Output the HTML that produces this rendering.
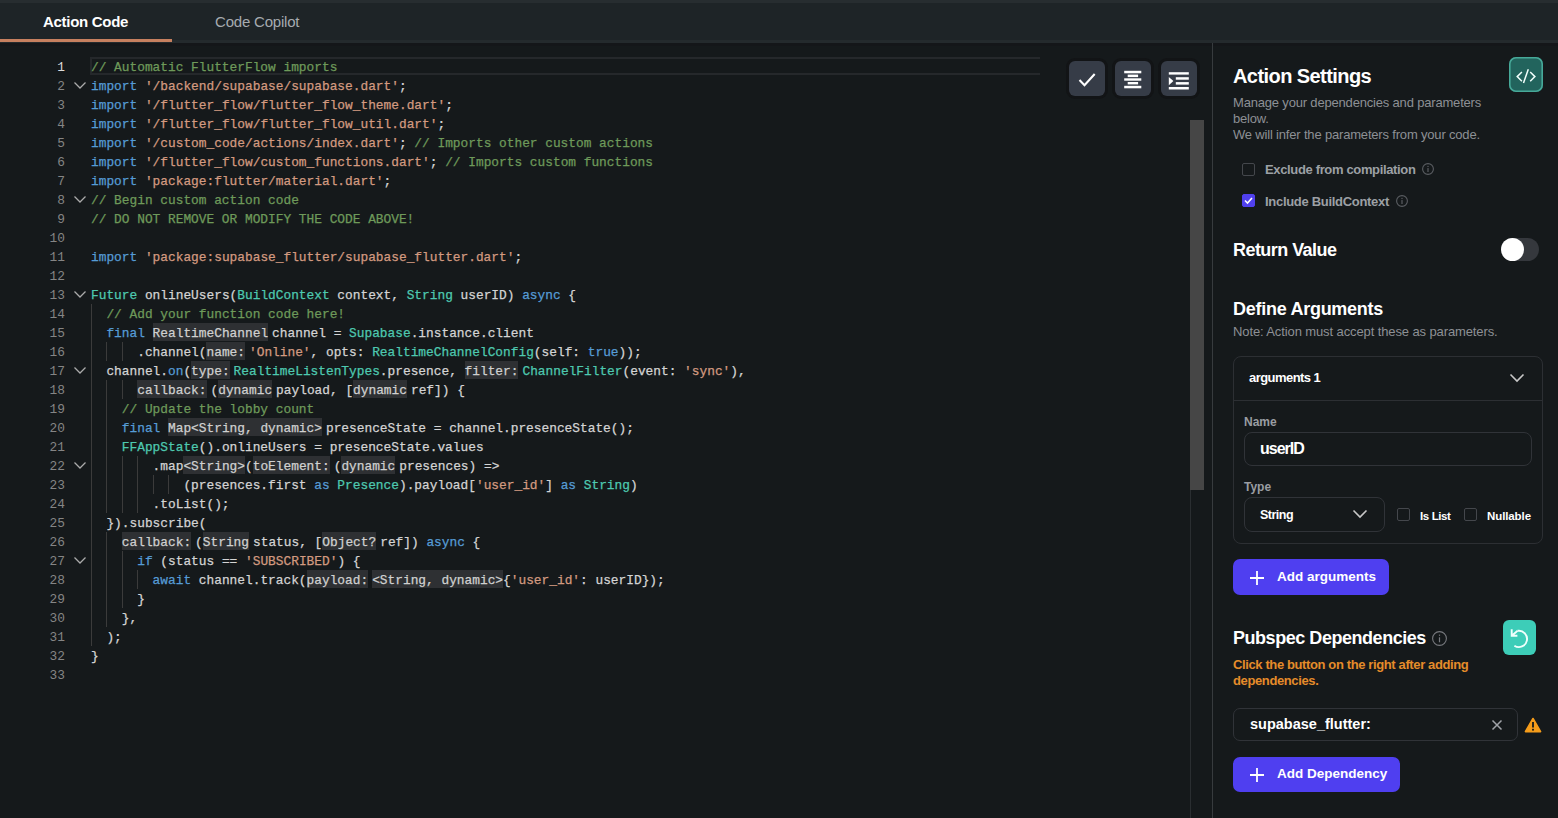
<!DOCTYPE html>
<html><head><meta charset="utf-8">
<style>
*{margin:0;padding:0;box-sizing:border-box}
html,body{width:1558px;height:818px;overflow:hidden;background:#15191b;font-family:"Liberation Sans",sans-serif;position:relative}
.a{position:absolute}
#tabs{left:0;top:0;width:1558px;height:43px;background:#1e2427;border-bottom:3px solid #242a2d}
#tabtop{left:0;top:0;width:1558px;height:3px;background:#272d30}
.tab{top:13px;font-size:15px;line-height:18px;white-space:nowrap}
#t1{left:43px;color:#fff;font-weight:bold;letter-spacing:-0.3px}
#t2{left:215px;color:#a6abb0;letter-spacing:-0.2px}
#uline{left:0;top:39px;width:172px;height:3px;background:#c6805f}
#tabshadow{left:0;top:43px;width:1558px;height:3px;background:#141619}
#divider{left:1212px;top:43px;width:1px;height:775px;background:#373b3e}
#sbtrack{left:1190px;top:490px;width:1px;height:328px;background:#2a2e31}
#sbthumb{left:1190px;top:120px;width:14px;height:370px;background:#464646}
#curline{left:90px;top:57px;width:950px;height:18px;border:2px solid #25282b;border-right:none}
.ln{position:absolute;left:0;width:65px;text-align:right;height:19px;line-height:19px;color:#858585;font-family:"Liberation Mono",monospace;font-size:12.83px}
.ln.act{color:#dcdcdc}
.fold{position:absolute;left:73px}
.ig{position:absolute;width:1px;height:19px;background:#3b3b3b}
.l{position:absolute;left:91px;height:19px;line-height:19px;white-space:pre;font-family:"Liberation Mono",monospace;font-size:12.83px;color:#d4d4d4;-webkit-text-stroke:0.25px currentColor}
.k{color:#569cd6}.s{color:#d39a80}.t{color:#4ec9b0}.c{color:#6e9a5a}
.h{background:#2e3033;color:#d0d0d0;margin-right:4px;padding:3px 0 0}.h.n{margin-right:0}
.btn{top:61px;width:36px;height:35px;border-radius:6px;background:#363c47;box-shadow:0 0 0 3px #121416}
/* panel */
.pt{color:#fff;font-weight:bold;white-space:nowrap}
.sub{color:#8d9095;font-size:13px;line-height:16px;white-space:nowrap}
.cb{width:13px;height:13px;border:1px solid #44474c;border-radius:2px}
.lbl{color:#9ca0a5;font-size:13.5px;font-weight:bold;white-space:nowrap}
.info{width:12px;height:12px;border:1px solid #6c6f74;border-radius:50%}.info:after{content:"";position:absolute;left:50%;top:30%;width:1.2px;height:45%;margin-left:-0.6px;background:#6c6f74}.info:before{content:"";position:absolute;left:50%;top:18%;width:1.2px;height:1.2px;margin-left:-0.6px;background:#6c6f74}
.box{border:1px solid #2c2f33;border-radius:8px}
.pbtn{background:#4f3ff0;border-radius:7px}
</style></head>
<body>
<div class="a" id="tabs"></div>
<div class="a" id="tabtop"></div>
<div class="a tab" id="t1">Action Code</div>
<div class="a tab" id="t2">Code Copilot</div>
<div class="a" id="uline"></div>
<div class="a" id="tabshadow"></div>
<div class="a" id="curline"></div>
<div class="a" id="sbtrack"></div>
<div class="ln act" style="top:58px">1</div>
<div class="l" style="top:58px"><span class="c">// Automatic FlutterFlow imports</span></div>
<div class="ln" style="top:77px">2</div>
<svg class="fold" style="top:81px" width="14" height="9" viewBox="0 0 14 9"><path d="M1.5 1.5 L7 7 L12.5 1.5" fill="none" stroke="#ababab" stroke-width="1.25"/></svg>
<div class="l" style="top:77px"><span class="k">import</span> <span class="s">&#x27;/backend/supabase/supabase.dart&#x27;</span>;</div>
<div class="ln" style="top:96px">3</div>
<div class="l" style="top:96px"><span class="k">import</span> <span class="s">&#x27;/flutter_flow/flutter_flow_theme.dart&#x27;</span>;</div>
<div class="ln" style="top:115px">4</div>
<div class="l" style="top:115px"><span class="k">import</span> <span class="s">&#x27;/flutter_flow/flutter_flow_util.dart&#x27;</span>;</div>
<div class="ln" style="top:134px">5</div>
<div class="l" style="top:134px"><span class="k">import</span> <span class="s">&#x27;/custom_code/actions/index.dart&#x27;</span>; <span class="c">// Imports other custom actions</span></div>
<div class="ln" style="top:153px">6</div>
<div class="l" style="top:153px"><span class="k">import</span> <span class="s">&#x27;/flutter_flow/custom_functions.dart&#x27;</span>; <span class="c">// Imports custom functions</span></div>
<div class="ln" style="top:172px">7</div>
<div class="l" style="top:172px"><span class="k">import</span> <span class="s">&#x27;package:flutter/material.dart&#x27;</span>;</div>
<div class="ln" style="top:191px">8</div>
<svg class="fold" style="top:195px" width="14" height="9" viewBox="0 0 14 9"><path d="M1.5 1.5 L7 7 L12.5 1.5" fill="none" stroke="#ababab" stroke-width="1.25"/></svg>
<div class="l" style="top:191px"><span class="c">// Begin custom action code</span></div>
<div class="ln" style="top:210px">9</div>
<div class="l" style="top:210px"><span class="c">// DO NOT REMOVE OR MODIFY THE CODE ABOVE!</span></div>
<div class="ln" style="top:229px">10</div>
<div class="l" style="top:229px"></div>
<div class="ln" style="top:248px">11</div>
<div class="l" style="top:248px"><span class="k">import</span> <span class="s">&#x27;package:supabase_flutter/supabase_flutter.dart&#x27;</span>;</div>
<div class="ln" style="top:267px">12</div>
<div class="l" style="top:267px"></div>
<div class="ln" style="top:286px">13</div>
<svg class="fold" style="top:290px" width="14" height="9" viewBox="0 0 14 9"><path d="M1.5 1.5 L7 7 L12.5 1.5" fill="none" stroke="#ababab" stroke-width="1.25"/></svg>
<div class="l" style="top:286px"><span class="t">Future</span> onlineUsers(<span class="t">BuildContext</span> context, <span class="t">String</span> userID) <span class="k">async</span> {</div>
<div class="ln" style="top:305px">14</div>
<div class="ig" style="top:304px;left:91.0px"></div>
<div class="l" style="top:305px">  <span class="c">// Add your function code here!</span></div>
<div class="ln" style="top:324px">15</div>
<div class="ig" style="top:323px;left:91.0px"></div>
<div class="l" style="top:324px">  <span class="k">final</span> <span class="h">RealtimeChannel</span>channel = <span class="t">Supabase</span>.instance.client</div>
<div class="ln" style="top:343px">16</div>
<div class="ig" style="top:342px;left:91.0px"></div>
<div class="ig" style="top:342px;left:106.4px"></div>
<div class="ig" style="top:342px;left:121.8px"></div>
<div class="l" style="top:343px">      .channel(<span class="h">name:</span><span class="s">&#x27;Online&#x27;</span>, opts: <span class="t">RealtimeChannelConfig</span>(self: <span class="k">true</span>));</div>
<div class="ln" style="top:362px">17</div>
<svg class="fold" style="top:366px" width="14" height="9" viewBox="0 0 14 9"><path d="M1.5 1.5 L7 7 L12.5 1.5" fill="none" stroke="#ababab" stroke-width="1.25"/></svg>
<div class="ig" style="top:361px;left:91.0px"></div>
<div class="l" style="top:362px">  channel.<span class="k">on</span>(<span class="h">type:</span><span class="t">RealtimeListenTypes</span>.presence, <span class="h">filter:</span><span class="t">ChannelFilter</span>(event: <span class="s">&#x27;sync&#x27;</span>),</div>
<div class="ln" style="top:381px">18</div>
<div class="ig" style="top:380px;left:91.0px"></div>
<div class="ig" style="top:380px;left:106.4px"></div>
<div class="ig" style="top:380px;left:121.8px"></div>
<div class="l" style="top:381px">      <span class="h">callback:</span>(<span class="h">dynamic</span>payload, [<span class="h">dynamic</span>ref]) {</div>
<div class="ln" style="top:400px">19</div>
<div class="ig" style="top:399px;left:91.0px"></div>
<div class="ig" style="top:399px;left:106.4px"></div>
<div class="l" style="top:400px">    <span class="c">// Update the lobby count</span></div>
<div class="ln" style="top:419px">20</div>
<div class="ig" style="top:418px;left:91.0px"></div>
<div class="ig" style="top:418px;left:106.4px"></div>
<div class="l" style="top:419px">    <span class="k">final</span> <span class="h">Map&lt;String, dynamic&gt;</span>presenceState = channel.presenceState();</div>
<div class="ln" style="top:438px">21</div>
<div class="ig" style="top:437px;left:91.0px"></div>
<div class="ig" style="top:437px;left:106.4px"></div>
<div class="l" style="top:438px">    <span class="t">FFAppState</span>().onlineUsers = presenceState.values</div>
<div class="ln" style="top:457px">22</div>
<svg class="fold" style="top:461px" width="14" height="9" viewBox="0 0 14 9"><path d="M1.5 1.5 L7 7 L12.5 1.5" fill="none" stroke="#ababab" stroke-width="1.25"/></svg>
<div class="ig" style="top:456px;left:91.0px"></div>
<div class="ig" style="top:456px;left:106.4px"></div>
<div class="ig" style="top:456px;left:121.8px"></div>
<div class="ig" style="top:456px;left:137.2px"></div>
<div class="l" style="top:457px">        .map<span class="h n">&lt;String&gt;</span>(<span class="h">toElement:</span>(<span class="h">dynamic</span>presences) =&gt;</div>
<div class="ln" style="top:476px">23</div>
<div class="ig" style="top:475px;left:91.0px"></div>
<div class="ig" style="top:475px;left:106.4px"></div>
<div class="ig" style="top:475px;left:121.8px"></div>
<div class="ig" style="top:475px;left:137.2px"></div>
<div class="ig" style="top:475px;left:152.6px"></div>
<div class="ig" style="top:475px;left:168.0px"></div>
<div class="l" style="top:476px">            (presences.first <span class="k">as</span> <span class="t">Presence</span>).payload[<span class="s">&#x27;user_id&#x27;</span>] <span class="k">as</span> <span class="t">String</span>)</div>
<div class="ln" style="top:495px">24</div>
<div class="ig" style="top:494px;left:91.0px"></div>
<div class="ig" style="top:494px;left:106.4px"></div>
<div class="ig" style="top:494px;left:121.8px"></div>
<div class="ig" style="top:494px;left:137.2px"></div>
<div class="l" style="top:495px">        .toList();</div>
<div class="ln" style="top:514px">25</div>
<div class="ig" style="top:513px;left:91.0px"></div>
<div class="l" style="top:514px">  }).subscribe(</div>
<div class="ln" style="top:533px">26</div>
<div class="ig" style="top:532px;left:91.0px"></div>
<div class="ig" style="top:532px;left:106.4px"></div>
<div class="l" style="top:533px">    <span class="h">callback:</span>(<span class="h">String</span>status, [<span class="h">Object?</span>ref]) <span class="k">async</span> {</div>
<div class="ln" style="top:552px">27</div>
<svg class="fold" style="top:556px" width="14" height="9" viewBox="0 0 14 9"><path d="M1.5 1.5 L7 7 L12.5 1.5" fill="none" stroke="#ababab" stroke-width="1.25"/></svg>
<div class="ig" style="top:551px;left:91.0px"></div>
<div class="ig" style="top:551px;left:106.4px"></div>
<div class="ig" style="top:551px;left:121.8px"></div>
<div class="l" style="top:552px">      <span class="k">if</span> (status == <span class="s">&#x27;SUBSCRIBED&#x27;</span>) {</div>
<div class="ln" style="top:571px">28</div>
<div class="ig" style="top:570px;left:91.0px"></div>
<div class="ig" style="top:570px;left:106.4px"></div>
<div class="ig" style="top:570px;left:121.8px"></div>
<div class="ig" style="top:570px;left:137.2px"></div>
<div class="l" style="top:571px">        <span class="k">await</span> channel.track(<span class="h">payload:</span><span class="h n">&lt;String, dynamic&gt;</span>{<span class="s">&#x27;user_id&#x27;</span>: userID});</div>
<div class="ln" style="top:590px">29</div>
<div class="ig" style="top:589px;left:91.0px"></div>
<div class="ig" style="top:589px;left:106.4px"></div>
<div class="ig" style="top:589px;left:121.8px"></div>
<div class="l" style="top:590px">      }</div>
<div class="ln" style="top:609px">30</div>
<div class="ig" style="top:608px;left:91.0px"></div>
<div class="ig" style="top:608px;left:106.4px"></div>
<div class="l" style="top:609px">    },</div>
<div class="ln" style="top:628px">31</div>
<div class="ig" style="top:627px;left:91.0px"></div>
<div class="l" style="top:628px">  );</div>
<div class="ln" style="top:647px">32</div>
<div class="l" style="top:647px">}</div>
<div class="ln" style="top:666px">33</div>
<div class="l" style="top:666px"></div>
<div class="a btn" style="left:1069px"><svg width="36" height="35" viewBox="0 0 36 35"><path d="M10.5 19 L15.5 24.2 L25.7 13" fill="none" stroke="#fff" stroke-width="2.1"/></svg></div>
<div class="a btn" style="left:1115px"><svg width="36" height="35" viewBox="0 0 36 35"><g fill="#fff"><rect x="9.2" y="9.8" width="17.1" height="2.5"/><rect x="12.7" y="13.6" width="10.4" height="2.5"/><rect x="9.2" y="17.3" width="17.1" height="2.4"/><rect x="12.7" y="21" width="10.4" height="2.4"/><rect x="9.2" y="24.8" width="17.1" height="2.5"/></g></svg></div>
<div class="a btn" style="left:1161px"><svg width="36" height="35" viewBox="0 0 36 35"><g fill="#fff"><rect x="7.8" y="11.2" width="20" height="2.4"/><rect x="14.8" y="16.2" width="13" height="2.5"/><rect x="14.8" y="21.1" width="13" height="2.5"/><rect x="7.8" y="26" width="20" height="2.5"/><path d="M7.8 15.9 L12.4 20 L7.8 24.2Z"/></g></svg></div>
<div class="a" id="sbthumb"></div>
<div class="a" id="divider"></div>

<!-- right panel -->
<div class="a pt" style="left:1233px;top:64px;font-size:20px;line-height:24px;letter-spacing:-0.57px">Action Settings</div>
<div class="a" style="left:1509px;top:57px;width:34px;height:35px;border-radius:7px;background:#22645d;box-shadow:inset 0 0 0 1.6px #47a999"><svg width="34" height="35" viewBox="0 0 34 35" style="position:absolute;left:0;top:0"><path d="M12.9 15 L8.2 19.6 L12.9 24.2 M21.2 15 L25.9 19.6 L21.2 24.2 M19.3 12.2 L14.5 26" fill="none" stroke="#f2fffc" stroke-width="1.5"/></svg></div>
<div class="a sub" style="left:1233px;top:95px;letter-spacing:-0.18px">Manage your dependencies and parameters<br>below.<br>We will infer the parameters from your code.</div>
<div class="a cb" style="left:1242px;top:163px"></div>
<div class="a lbl" style="left:1265px;top:162px;font-size:13px;letter-spacing:-0.35px">Exclude from compilation</div>
<svg class="a" style="left:1422px;top:163px" width="12" height="12" viewBox="0 0 12 12"><circle cx="6.0" cy="6.0" r="5.4" fill="none" stroke="#5a5d62" stroke-width="1.1"/><rect x="5.4" y="5.04" width="1.2" height="3.96" fill="#5a5d62"/><rect x="5.4" y="2.88" width="1.2" height="1.2" fill="#5a5d62"/></svg>
<div class="a cb" style="left:1242px;top:194px;background:#5040ee;border-color:#5040ee"><svg width="11" height="11" viewBox="0 0 11 11" style="position:absolute;left:0;top:0"><path d="M2 5.5 L4.5 8 L9 3" fill="none" stroke="#fff" stroke-width="1.6"/></svg></div>
<div class="a lbl" style="left:1265px;top:194px;font-size:13px;letter-spacing:-0.3px">Include BuildContext</div>
<svg class="a" style="left:1396px;top:195px" width="12" height="12" viewBox="0 0 12 12"><circle cx="6.0" cy="6.0" r="5.4" fill="none" stroke="#5a5d62" stroke-width="1.1"/><rect x="5.4" y="5.04" width="1.2" height="3.96" fill="#5a5d62"/><rect x="5.4" y="2.88" width="1.2" height="1.2" fill="#5a5d62"/></svg>

<div class="a pt" style="left:1233px;top:240px;font-size:18px;line-height:20px;letter-spacing:-0.55px">Return Value</div>
<div class="a" style="left:1501px;top:238px;width:38px;height:23px;border-radius:12px;background:#35383d"></div>
<div class="a" style="left:1501px;top:238px;width:23px;height:23px;border-radius:50%;background:#fff"></div>

<div class="a pt" style="left:1233px;top:299px;font-size:18px;line-height:20px;letter-spacing:-0.27px">Define Arguments</div>
<div class="a sub" style="left:1233px;top:324px;letter-spacing:-0.11px">Note: Action must accept these as parameters.</div>

<div class="a box" style="left:1233px;top:356px;width:310px;height:188px"></div>
<div class="a" style="left:1234px;top:400px;width:308px;height:1px;background:#2c2f33"></div>
<div class="a pt" style="left:1249px;top:370px;font-size:13px;line-height:16px;letter-spacing:-0.55px">arguments 1</div>
<svg class="a" style="left:1509px;top:373px" width="16" height="10" viewBox="0 0 16 10"><path d="M1.5 1.5 L8 8 L14.5 1.5" fill="none" stroke="#c8c8c8" stroke-width="1.6"/></svg>
<div class="a lbl" style="left:1244px;top:415px;font-size:12px;color:#9a9da2">Name</div>
<div class="a box" style="left:1244px;top:432px;width:288px;height:34px;border:1.5px solid #303338;border-radius:8px"></div>
<div class="a pt" style="left:1260px;top:439px;font-size:16px;line-height:20px;letter-spacing:-1px">userID</div>
<div class="a lbl" style="left:1244px;top:480px;font-size:12px;color:#9a9da2">Type</div>
<div class="a box" style="left:1244px;top:497px;width:141px;height:35px;border:1.5px solid #303338;border-radius:8px"></div>
<div class="a pt" style="left:1260px;top:507px;font-size:12.5px;line-height:16px;letter-spacing:-0.5px">String</div>
<svg class="a" style="left:1352px;top:509px" width="16" height="10" viewBox="0 0 16 10"><path d="M1.5 1.5 L8 8 L14.5 1.5" fill="none" stroke="#c8c8c8" stroke-width="1.6"/></svg>
<div class="a cb" style="left:1397px;top:508px"></div>
<div class="a pt" style="left:1420px;top:509px;font-size:11.5px;line-height:14px;letter-spacing:-0.38px">Is List</div>
<div class="a cb" style="left:1464px;top:508px"></div>
<div class="a pt" style="left:1487px;top:509px;font-size:11.5px;line-height:14px;letter-spacing:-0.1px">Nullable</div>

<div class="a pbtn" style="left:1233px;top:559px;width:156px;height:36px"></div>
<svg class="a" style="left:1249px;top:570px" width="16" height="16" viewBox="0 0 16 16"><path d="M8 1 V15 M1 8 H15" stroke="#fff" stroke-width="1.8"/></svg>
<div class="a pt" style="left:1277px;top:569px;font-size:13.5px;line-height:16px">Add arguments</div>

<div class="a pt" style="left:1233px;top:628px;font-size:18px;line-height:20px;letter-spacing:-0.46px">Pubspec Dependencies</div>
<svg class="a" style="left:1432px;top:631px" width="15" height="15" viewBox="0 0 15 15"><circle cx="7.5" cy="7.5" r="6.9" fill="none" stroke="#77797e" stroke-width="1.1"/><rect x="6.9" y="6.30" width="1.2" height="4.95" fill="#77797e"/><rect x="6.9" y="3.60" width="1.2" height="1.2" fill="#77797e"/></svg>
<div class="a" style="left:1503px;top:620px;width:33px;height:35px;border-radius:6px;background:#3dcdb8"><svg width="33" height="35" viewBox="0 0 33 35" style="position:absolute;left:0;top:0"><path d="M14.6 10.8 A8.2 8.2 0 1 1 11.4 25.8" fill="none" stroke="#f0fffc" stroke-width="1.9"/><path d="M8.7 9.3 V15.7 H14.4 M8.7 15.7 L14.6 10.8" fill="none" stroke="#f0fffc" stroke-width="1.9"/></svg></div>
<div class="a sub" style="left:1233px;top:657px;color:#e58c2a;font-weight:bold;letter-spacing:-0.38px">Click the button on the right after adding<br>dependencies.</div>
<div class="a box" style="left:1233px;top:708px;width:285px;height:33px;border:1.5px solid #303338;border-radius:7px"></div>
<div class="a pt" style="left:1250px;top:715px;font-size:14.5px;line-height:18px">supabase_flutter:</div>
<svg class="a" style="left:1491px;top:719px" width="12" height="12" viewBox="0 0 12 12"><path d="M1.5 1.5 L10.5 10.5 M10.5 1.5 L1.5 10.5" stroke="#a0a3a8" stroke-width="1.5"/></svg>
<svg class="a" style="left:1524px;top:717px" width="18" height="16" viewBox="0 0 18 16"><path d="M9 1.5 L16.6 14.6 H1.4Z" fill="#f59c1a" stroke="#f59c1a" stroke-width="1.6" stroke-linejoin="round"/><rect x="8.1" y="5" width="1.8" height="5.5" fill="#15191b"/><rect x="8.1" y="11.8" width="1.8" height="1.8" fill="#15191b"/></svg>
<div class="a pbtn" style="left:1233px;top:757px;width:167px;height:35px"></div>
<svg class="a" style="left:1249px;top:767px" width="16" height="16" viewBox="0 0 16 16"><path d="M8 1 V15 M1 8 H15" stroke="#fff" stroke-width="1.8"/></svg>
<div class="a pt" style="left:1277px;top:766px;font-size:13.5px;line-height:16px">Add Dependency</div>
</body></html>
